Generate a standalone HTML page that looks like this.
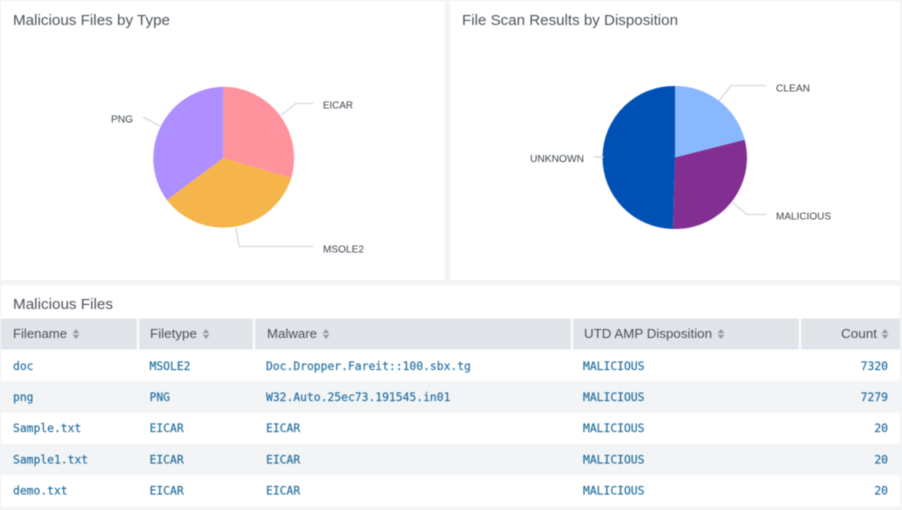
<!DOCTYPE html>
<html><head><meta charset="utf-8">
<style>
html,body{margin:0;padding:0;width:902px;height:510px;overflow:hidden;background:#f2f4f5}
svg{display:block;position:absolute;left:0;top:0;filter:blur(0.4px)}
.t{font:15px "Liberation Sans",sans-serif;fill:#4d535c}
.l{font:10.400px "Liberation Sans",sans-serif;fill:#3c444d}
.h{font:13px "Liberation Sans",sans-serif;fill:#4a5058}
.c{font:11.35px "DejaVu Sans Mono","Liberation Mono",monospace;fill:#1f6c9f;stroke:#1f6c9f;stroke-width:.15px}
.ln{fill:none;stroke:#cfd1d4;stroke-width:1.100}
.s{fill:#969ca3}
</style></head><body>
<svg width="902" height="510" viewBox="0 0 902 510" xmlns="http://www.w3.org/2000/svg">
<rect x="1" y="1" width="444" height="279" fill="#fff"/>
<rect x="450" y="1" width="450" height="279" fill="#fff"/>
<rect x="1" y="285" width="899" height="222" fill="#fff"/>

<text class="t" x="13" y="25" textLength="157" lengthAdjust="spacingAndGlyphs">Malicious Files by Type</text>
<text class="t" x="462" y="25" textLength="216" lengthAdjust="spacingAndGlyphs">File Scan Results by Disposition</text>
<text class="t" x="13" y="309" textLength="100" lengthAdjust="spacingAndGlyphs">Malicious Files</text>

<!-- Pie 1 -->
<path d="M223.300 158V86.700A71.500 71.500 0 0 1 291.300 178Z" fill="#ff939d"/>
<path d="M223.300 158L291.300 178A71.500 71.500 0 0 1 166.800 200Z" fill="#f5b54a"/>
<path d="M223.300 158L166.800 200A71.500 71.500 0 0 1 223.300 86.700Z" fill="#af8fff"/>
<path class="ln" d="M281 115L296 103.500H313"/>
<path class="ln" d="M236 228L239 246.500H313"/>
<path class="ln" d="M160 126L143 117"/>
<text class="l" x="323" y="108.500" textLength="30" lengthAdjust="spacingAndGlyphs">EICAR</text>
<text class="l" x="323" y="252.500" textLength="41" lengthAdjust="spacingAndGlyphs">MSOLE2</text>
<text class="l" x="111" y="122.500" textLength="22" lengthAdjust="spacingAndGlyphs">PNG</text>

<!-- Pie 2 -->
<path d="M675 157.500V86A71.500 71.500 0 0 1 744.700 139.700Z" fill="#8ab8ff"/>
<path d="M675 157.500L744.700 139.700A71.500 71.500 0 0 1 673 229Z" fill="#832f92"/>
<path d="M675 157.500L673 229A71.500 71.500 0 0 1 675 86Z" fill="#0051b5"/>
<path class="ln" d="M719 101L731 85.500H766"/>
<path class="ln" d="M732 202L747 214.500H766"/>
<path class="ln" d="M594 157H604"/>
<text class="l" x="776" y="91.500" textLength="34" lengthAdjust="spacingAndGlyphs">CLEAN</text>
<text class="l" x="776" y="219.500" textLength="55" lengthAdjust="spacingAndGlyphs">MALICIOUS</text>
<text class="l" x="530" y="162" textLength="54" lengthAdjust="spacingAndGlyphs">UNKNOWN</text>

<!-- Table header -->
<g fill="#e1e5ea">
<rect x="1" y="318.500" width="136" height="31"/>
<rect x="139" y="318.500" width="114" height="31"/>
<rect x="255" y="318.500" width="316" height="31"/>
<rect x="573" y="318.500" width="226" height="31"/>
<rect x="801" y="318.500" width="99" height="31"/>
</g>
<text class="h" x="13" y="338" textLength="54" lengthAdjust="spacingAndGlyphs">Filename</text>
<text class="h" x="150" y="338" textLength="47" lengthAdjust="spacingAndGlyphs">Filetype</text>
<text class="h" x="267" y="338" textLength="50" lengthAdjust="spacingAndGlyphs">Malware</text>
<text class="h" x="584" y="338" textLength="128" lengthAdjust="spacingAndGlyphs">UTD AMP Disposition</text>
<text class="h" x="841" y="338" textLength="36" lengthAdjust="spacingAndGlyphs">Count</text>
<g class="s">
<path d="M72.500 333.300L76 329L79.500 333.300ZM72.500 334.700H79.500L76 339Z"/>
<path d="M202.500 333.300L206 329L209.500 333.300ZM202.500 334.700H209.500L206 339Z"/>
<path d="M322.500 333.300L326 329L329.500 333.300ZM322.500 334.700H329.500L326 339Z"/>
<path d="M717.500 333.300L721 329L724.500 333.300ZM717.500 334.700H724.500L721 339Z"/>
<path d="M881.500 333.300L885 329L888.500 333.300ZM881.500 334.700H888.500L885 339Z"/>
</g>

<!-- Stripes -->
<rect x="1" y="381" width="899" height="31.500" fill="#f2f4f5"/>
<rect x="1" y="444" width="899" height="31" fill="#f2f4f5"/>

<!-- Rows -->
<text class="c" x="13" y="370">doc</text>
<text class="c" x="149.500" y="370">MSOLE2</text>
<text class="c" x="266" y="370">Doc.Dropper.Fareit::100.sbx.tg</text>
<text class="c" x="583" y="370">MALICIOUS</text>
<text class="c" x="888" y="370" text-anchor="end">7320</text>

<text class="c" x="13" y="401">png</text>
<text class="c" x="149.500" y="401">PNG</text>
<text class="c" x="266" y="401">W32.Auto.25ec73.191545.in01</text>
<text class="c" x="583" y="401">MALICIOUS</text>
<text class="c" x="888" y="401" text-anchor="end">7279</text>

<text class="c" x="13" y="432">Sample.txt</text>
<text class="c" x="149.500" y="432">EICAR</text>
<text class="c" x="266" y="432">EICAR</text>
<text class="c" x="583" y="432">MALICIOUS</text>
<text class="c" x="888" y="432" text-anchor="end">20</text>

<text class="c" x="13" y="463.500">Sample1.txt</text>
<text class="c" x="149.500" y="463.500">EICAR</text>
<text class="c" x="266" y="463.500">EICAR</text>
<text class="c" x="583" y="463.500">MALICIOUS</text>
<text class="c" x="888" y="463.500" text-anchor="end">20</text>

<text class="c" x="13" y="494.500">demo.txt</text>
<text class="c" x="149.500" y="494.500">EICAR</text>
<text class="c" x="266" y="494.500">EICAR</text>
<text class="c" x="583" y="494.500">MALICIOUS</text>
<text class="c" x="888" y="494.500" text-anchor="end">20</text>
</svg>
</body></html>
